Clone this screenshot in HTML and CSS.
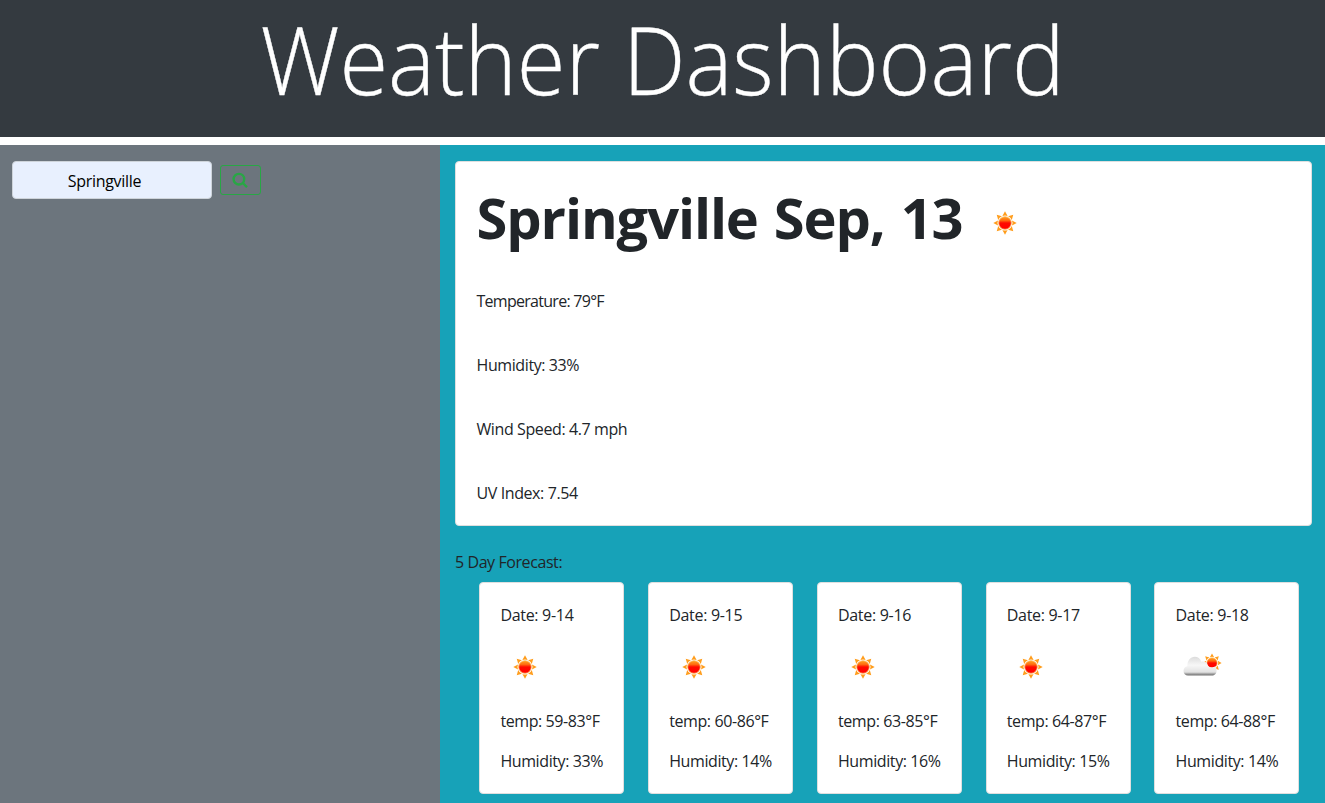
FILE: index.html
```html
<!DOCTYPE html>
<html lang="en">
<head>
<meta charset="utf-8">
<title>Weather Dashboard</title>
<link rel="stylesheet" href="styles.css">
</head>
<body>
<svg class="defs" width="0" height="0" aria-hidden="true">
  <defs>
    <linearGradient id="core" x1="0" y1="0" x2="0" y2="1">
      <stop offset="0" stop-color="#ffa51f"/>
      <stop offset=".3" stop-color="#ff6a10"/>
      <stop offset=".5" stop-color="#ff0a00"/>
      <stop offset="1" stop-color="#ff0000"/>
    </linearGradient>
    <linearGradient id="cloud" x1="0" y1="0" x2="0" y2="1">
      <stop offset="0" stop-color="#dcdcdc"/>
      <stop offset=".45" stop-color="#f7f7f7"/>
      <stop offset=".82" stop-color="#e2e2e2"/>
      <stop offset=".92" stop-color="#999"/>
      <stop offset="1" stop-color="#707070"/>
    </linearGradient>
    <symbol id="sun" viewBox="-25 -25 50 50">
      <g fill="#ff9d1c">
        <path id="ray" d="M0-11.7L2.600-7Q0-8.200-2.600-7Z"/>
        <use href="#ray" transform="rotate(45)"/>
        <use href="#ray" transform="rotate(90)"/>
        <use href="#ray" transform="rotate(135)"/>
        <use href="#ray" transform="rotate(180)"/>
        <use href="#ray" transform="rotate(225)"/>
        <use href="#ray" transform="rotate(270)"/>
        <use href="#ray" transform="rotate(315)"/>
      </g>
      <circle r="6.300" fill="url(#core)" stroke="#ffb85a" stroke-width=".8"/>
    </symbol>
    <symbol id="partly" viewBox="0 0 50 50">
      <use href="#sun" x="17" y="0" width="41" height="41" transform="translate(-.5 .5)"/>
      <path d="M13 33.500C10.400 33.500 8.500 31.600 8.500 29C8.500 26.500 10.200 24.800 12.300 24.300C12.300 18.500 15.500 14.800 19.700 14.800C23 14.800 25.100 16.600 26.300 19.800C28.500 19 31 19.800 32 21.500C32.600 23 33.600 25.300 36.400 25.300C38 25.300 39.300 25 40.500 24.200C41.200 25.200 41.600 26.400 41.600 28.400C41.600 31.600 39.500 33.500 37 33.500Z" fill="url(#cloud)"/>
    </symbol>
  </defs>
</svg>
<header class="banner"><h1 class="banner-title">Weather Dashboard</h1></header>
<main class="columns">
  <aside class="sidebar">
    <form class="search">
      <input class="search-input" type="text" value="Springville" aria-label="City">
      <button class="search-button" type="button" aria-label="Search">
        <svg width="16" height="16" viewBox="0 0 16 16"><circle cx="6.900" cy="7.200" r="5.300"/><path d="M10.800 11L15 15.200"/></svg>
      </button>
    </form>
  </aside>
  <section class="content">
    <article class="card today">
      <h2 class="today-title"><span class="today-name">Springville Sep, 13</span><svg class="icon"><use href="#sun"/></svg></h2>
      <p class="reading r-temp">Temperature: 79°F</p>
      <p class="reading">Humidity: 33%</p>
      <p class="reading">Wind Speed: 4.7 mph</p>
      <p class="reading">UV Index: 7.54</p>
    </article>
    <p class="forecast-label">5 Day Forecast:</p>
    <div class="forecast">
      <article class="card day"><p class="date">Date: 9-14</p><svg class="icon"><use href="#sun"/></svg><p class="temp">temp: 59-83°F</p><p class="hum">Humidity: 33%</p></article>
      <article class="card day"><p class="date">Date: 9-15</p><svg class="icon"><use href="#sun"/></svg><p class="temp">temp: 60-86°F</p><p class="hum">Humidity: 14%</p></article>
      <article class="card day"><p class="date">Date: 9-16</p><svg class="icon"><use href="#sun"/></svg><p class="temp">temp: 63-85°F</p><p class="hum">Humidity: 16%</p></article>
      <article class="card day"><p class="date">Date: 9-17</p><svg class="icon"><use href="#sun"/></svg><p class="temp">temp: 64-87°F</p><p class="hum">Humidity: 15%</p></article>
      <article class="card day"><p class="date">Date: 9-18</p><svg class="icon"><use href="#partly"/></svg><p class="temp">temp: 64-88°F</p><p class="hum">Humidity: 14%</p></article>
    </div>
  </section>
</main>
</body>
</html>
```
FILE: styles.css
```css
* { box-sizing: border-box; }
html, body { height: 100%; }
body {
  margin: 0;
  display: flex;
  flex-direction: column;
  overflow: hidden;
  background: #fff;
  color: #212529;
  font: 400 16px/24px "Segoe UI", "Open Sans", "Noto Sans", sans-serif;
  letter-spacing: -.4px;
}
p, h1, h2 { margin: 0; }
.defs { position: absolute; }
.banner {
  flex: none;
  height: 137px;
  margin-bottom: 8px;
  background: #343a40;
  text-align: center;
}
.banner-title {
  color: #fff;
  font-size: 94px;
  font-weight: 300;
  line-height: 119px;
  letter-spacing: 0;
  white-space: nowrap;
  transform: scaleX(.942);
  -webkit-text-stroke: .4px #fff;
}
.columns { flex: 1; display: flex; min-height: 0; }
.sidebar { width: 440px; padding: 16px 12px; background: #6c757d; }
.search { display: flex; align-items: center; gap: 8px; }
.search-input {
  width: 200px;
  height: 38px;
  padding: 1px 27px 0 12px;
  border: 1px solid #ced4da;
  border-radius: 4px;
  background: #e8f0fe;
  color: #000;
  font: inherit;
  letter-spacing: -.3px;
  text-align: center;
}
.search-button {
  display: flex;
  align-items: center;
  justify-content: center;
  width: 41px;
  height: 30px;
  padding: 0 1px 0 0;
  border: 1px solid #28a745;
  border-radius: 3px;
  background: transparent;
}
.search-button svg { fill: none; stroke: #28a745; stroke-width: 2.4; }
.content { flex: 1; padding: 16px 13px 0 15px; background: #17a2b8; }
.card { border: 1px solid #dfdfdf; border-radius: 4px; background: #fff; }
.today { height: 365px; padding: 20px 20px 20px 20.500px; }
.today-title {
  display: flex;
  align-items: center;
  gap: 17px;
  height: 75px;
  font-size: 56px;
  font-weight: 700;
  line-height: 71px;
  letter-spacing: -1.100px;
  word-spacing: 2.500px;
}
.today-name { height: 75px; }
.icon { display: block; width: 50px; height: 50px; }
.today .icon { margin-top: 7px; }
.reading { padding-top: 32px; margin-bottom: 8px; white-space: nowrap; }
.r-temp { letter-spacing: -.72px; }
.forecast-label { margin-top: 24px; letter-spacing: -.42px; }
.forecast { display: grid; grid-template-columns: repeat(5, 145px); gap: 23.800px; margin: 8px 0 0 24.200px; }
.day { height: 212px; padding: 20px 0 20px 20.200px; white-space: nowrap; }
.day .icon { margin: 15px 0 17px -.3px; }
.date { letter-spacing: -.3px; }
.hum { margin-top: 16px; }
```
